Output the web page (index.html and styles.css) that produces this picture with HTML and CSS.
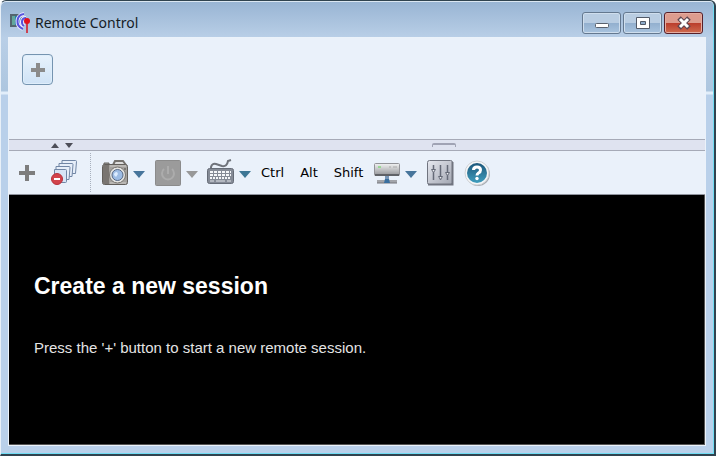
FILE: index.html
```
<!DOCTYPE html>
<html lang="en">
<head>
    <meta charset="UTF-8">
    <meta name="viewport" content="width=device-width, initial-scale=1.0">
    <title>Remote Control</title>
    <link rel="stylesheet" href="styles.css">
</head>
<body>
    <div class="window">
        <header class="titlebar">
            <svg class="app-icon" width="22" height="22" viewBox="0 0 22 22">
                <path d="M0 2h12v13H0z" fill="#53656f"/>
                <path d="M2 4h9v9H2z" fill="#217eaf"/>
                <path d="M2 4h3v9H2z" fill="#62a79b"/>
                <path d="M14 2C6 3 5 14 13 17M16 6c-5 0-5 6-2 8" fill="none" stroke="#eceaff" stroke-width="4"/>
                <path d="M14 2C6 3 5 14 13 17M16 6c-5 0-5 6-2 8" fill="none" stroke="#5754dc" stroke-width="2"/>
                <path d="M17 11v10" stroke="#d51520" stroke-width="1.5"/>
                <circle cx="17" cy="9" r="3" fill="#e31220"/>
            </svg>
            <h1>Remote Control</h1>
            <div class="window-buttons">
                <button type="button" class="window-button" aria-label="Minimize">
                    <svg width="16" height="14" viewBox="0 0 16 14">
                        <rect x="1.5" y="7.5" width="13" height="4" rx="1" fill="#fff" stroke="#59616d"/>
                    </svg>
                </button>
                <button type="button" class="window-button" aria-label="Maximize">
                    <svg width="16" height="14" viewBox="0 0 16 14">
                        <path d="M1.5 1.5h13v11h-13z" fill="#fff" stroke="#525a68"/>
                        <path d="M5.5 5.5h5v3h-5z" fill="#8eaccb" stroke="#525a68"/>
                    </svg>
                </button>
                <button type="button" class="window-button close" aria-label="Close">
                    <svg width="16" height="14" viewBox="0 0 16 14">
                        <path d="M3 2l10 10M13 2L3 12" stroke="#5d4650" stroke-width="5"/>
                        <path d="M4 3l8 8M12 3l-8 8" stroke="#fff" stroke-width="3"/>
                    </svg>
                </button>
            </div>
        </header>

        <main class="content">
            <div class="sessions">
                <button type="button" class="add-session" aria-label="New session">
                    <svg width="16" height="16" viewBox="0 0 16 16">
                        <path d="M6 1h4v5h5v4h-5v5H6v-5H1V6h5z" fill="#8b8b8b"/>
                    </svg>
                </button>
            </div>

            <div class="splitter">
                <button type="button" aria-label="Collapse">
                    <svg width="8" height="5" viewBox="0 0 8 5"><path d="M4 0l4 5H0z" fill="#4d4e58"/></svg>
                </button>
                <button type="button" aria-label="Expand">
                    <svg width="8" height="5" viewBox="0 0 8 5"><path d="M0 0h8L4 5z" fill="#4d4e58"/></svg>
                </button>
                <span class="grip"></span>
            </div>

            <div class="toolbar">
                <button type="button" class="tool" aria-label="New session">
                    <svg width="18" height="18" viewBox="0 0 18 18">
                        <path d="M7 1h4v6h6v4h-6v6H7v-6H1V7h6z" fill="#7d7d7d"/>
                    </svg>
                </button>
                <button type="button" class="tool stack" aria-label="Close all sessions">
                    <svg width="28" height="28" viewBox="0 0 28 28">
                        <g fill="#e6eef9" stroke="#7186a5">
                            <path d="M12 1.5h13.5q1 0 1 1l-1 12H12z"/>
                            <path d="M9 4.5h13q1 0 1 1l-1 12H9z"/>
                            <path d="M6 7.5h13q1 0 1 1l-1 12H6z"/>
                            <path d="M4.5 10.5h11q1 0 1 1v11q0 1-1 1h-11z" fill="#d6e4f5"/>
                        </g>
                        <circle cx="7" cy="20" r="5.5" fill="#d2434b" stroke="#b7313b"/>
                        <path d="M4 19h6v2H4z" fill="#fff"/>
                    </svg>
                </button>
                <span class="divider"></span>
                <button type="button" class="tool drop" aria-label="Screenshot">
                    <svg width="28" height="28" viewBox="0 0 28 28">
                        <path d="M12 6l2-4h8l3 4" fill="#ddd" stroke="#74716d" stroke-width="2"/>
                        <path d="M3 6V4h5v2" fill="#999" stroke="#66635f"/>
                        <rect x="1.5" y="5.5" width="25" height="20" rx="2" fill="#a4a19d" stroke="#625f5b"/>
                        <path d="M2 6h6v19H2z" fill="#797571"/>
                        <path d="M9 7h16M9 24h16" stroke="#d0cecb"/>
                        <circle cx="16.5" cy="16" r="8" fill="#e3e3e1" stroke="#77746f"/>
                        <circle cx="16.5" cy="16" r="5.5" fill="#9dbce4" stroke="#586984"/>
                        <path d="M13 16q0-3 3-3l1 2-2 3z" fill="#dcecff"/>
                        <circle cx="24" cy="10" r="1" fill="#6d6a66"/>
                    </svg>
                    <svg class="arrow" width="12" height="7" viewBox="0 0 12 7"><path d="M0 0h12L6 7z" fill="#47759b"/></svg>
                </button>
                <button type="button" class="tool drop" aria-label="Power" disabled>
                    <svg width="28" height="28" viewBox="0 0 28 28">
                        <rect x="1.5" y="1.5" width="25" height="25" rx="1" fill="#9b9b9b" stroke="#8b8b8b"/>
                        <path d="M10 10a6 6 0 1 0 8 0M14 7v8" fill="none" stroke="#acacac" stroke-width="2"/>
                    </svg>
                    <svg class="arrow" width="12" height="7" viewBox="0 0 12 7"><path d="M0 0h12L6 7z" fill="#989898"/></svg>
                </button>
                <button type="button" class="tool drop" aria-label="Keyboard">
                    <svg width="28" height="28" viewBox="0 0 28 28">
                        <path d="M4 10V8q1-4 5-3l6 2q5 1 6-5l3-1" fill="none" stroke="#6f737b" stroke-width="2"/>
                        <rect x="0.5" y="9.5" width="26" height="15" rx="2" fill="#858b96" stroke="#666c77"/>
                        <path d="M3 13h21M3 16h21" stroke="#f5f7fa" stroke-width="2" stroke-dasharray="3 1"/>
                        <path d="M3 19h21" stroke="#f5f7fa" stroke-width="2" stroke-dasharray="2 1"/>
                        <path d="M3 22h4m2 0h9m2 0h4" stroke="#e1e4e9"/>
                    </svg>
                    <svg class="arrow" width="12" height="7" viewBox="0 0 12 7"><path d="M0 0h12L6 7z" fill="#3d7795"/></svg>
                </button>
                <div class="keys">
                    <button type="button" class="tool">Ctrl</button>
                    <button type="button" class="tool">Alt</button>
                    <button type="button" class="tool">Shift</button>
                </div>
                <button type="button" class="tool drop" aria-label="Virtual media">
                    <svg width="28" height="28" viewBox="0 0 28 28">
                        <defs>
                            <linearGradient id="drive" x2="0" y2="1">
                                <stop stop-color="#f2f3f3"/>
                                <stop offset="1" stop-color="#929397"/>
                            </linearGradient>
                        </defs>
                        <rect x="1.5" y="4.5" width="25" height="12" rx="1" fill="url(#drive)" stroke="#929398"/>
                        <path d="M2 16h24" stroke="#606267" stroke-width="2"/>
                        <path d="M5 8h3" stroke="#5ad951"/>
                        <path d="M16 8h2m2 0h4" stroke="#aaa"/>
                        <path d="M12 17h4v5h-4z" fill="#7896b7"/>
                        <path d="M4 21h20v3H4z" fill="#a3a5aa"/>
                        <path d="M4 24h20" stroke="#74777d"/>
                        <path d="M11 24l1-4h4l1 4z" fill="#396f9f"/>
                    </svg>
                    <svg class="arrow" width="12" height="7" viewBox="0 0 12 7"><path d="M0 0h12L6 7z" fill="#47759b"/></svg>
                </button>
                <button type="button" class="tool" aria-label="Settings">
                    <svg width="28" height="28" viewBox="0 0 28 28">
                        <defs>
                            <linearGradient id="panel" x2="1" y2="1">
                                <stop stop-color="#e6e8ef"/>
                                <stop offset="1" stop-color="#a2a6b1"/>
                            </linearGradient>
                        </defs>
                        <rect x="1.5" y="1.5" width="25" height="24" rx="2" fill="url(#panel)" stroke="#70747f"/>
                        <path d="M2 25.5h24.500V3" fill="none" stroke="#70747f" stroke-width="2"/>
                        <path d="M7.5 6v15M14.5 6v15M21.5 6v15" stroke="#656a77" stroke-width="1.5"/>
                        <path d="M5.5 10.5h4l-2 3zM12.5 17.5h4l-2 3zM19.5 13.5h4l-2 3z" fill="#eef0f4" stroke="#656a77"/>
                    </svg>
                </button>
                <button type="button" class="tool" aria-label="Help">
                    <svg width="28" height="28" viewBox="0 0 28 28">
                        <defs>
                            <linearGradient id="help" x2="0" y2="1">
                                <stop stop-color="#1d577b"/>
                                <stop offset="1" stop-color="#3f9dbd"/>
                            </linearGradient>
                        </defs>
                        <circle cx="15" cy="15" r="12" fill="#a9adb3"/>
                        <circle cx="14" cy="14" r="12" fill="#f5f6f7" stroke="#cfd2d6"/>
                        <circle cx="14" cy="14" r="10" fill="url(#help)"/>
                        <path d="M10.5 11q0-3 3.5-3t3.5 3q0 2-2 3-1.5 1-1.5 2.5" fill="none" stroke="#fff" stroke-width="3"/>
                        <circle cx="14" cy="19.5" r="1.7" fill="#fff"/>
                    </svg>
                </button>
            </div>

            <section class="screen">
                <h2>Create a new session</h2>
                <p>Press the '+' button to start a new remote session.</p>
            </section>
        </main>
    </div>
</body>
</html>
```
FILE: styles.css
```
* {
    box-sizing: border-box;
}
body {
    margin: 0;
    padding: 0 1px 1px 0;
    min-height: 100vh;
    display: flex;
    background: #fff;
}
h1, h2, p {
    margin: 0;
    font-weight: normal;
}
button {
    padding: 0;
    border: none;
    background: none;
    color: inherit;
    font: inherit;
}
svg {
    display: block;
}
.window {
    flex: 1;
    display: flex;
    flex-direction: column;
    padding: 0 8px 8px 7px;
    border: solid #30434f;
    border-width: 1px 2px 2px 1px;
    border-left-color: #e8f0f8;
    border-radius: 6px 6px 0 0;
    background: linear-gradient(#98b4d3, #b9cfe7 37px, #adc6df 90px, #e2eefa 91px, #e2eefa 93px, #b9d0ea 94px);
    box-shadow: inset 0 1px #dbe7f2, inset -1px -1px #6fdcf3;
}
.titlebar {
    display: flex;
    align-items: center;
    height: 36px;
    padding: 8px 3px 0 2px;
}
.titlebar h1 {
    flex: 1;
    margin-left: 3px;
    color: #151c26;
    font: 14px/20px "Noto Sans", "Segoe UI", sans-serif;
}
.window-buttons {
    display: flex;
    gap: 2px;
}
.window-button {
    display: flex;
    align-items: center;
    justify-content: center;
    width: 39px;
    height: 22px;
    border: 1px solid #64788f;
    border-radius: 3px;
    background: linear-gradient(#b9cde2 50%, #92afce 50%, #a9c4df);
    box-shadow: inset 0 0 0 1px #cfdeed;
}
.window-button.close {
    border-color: #571f29;
    background: linear-gradient(#dd9c8e 50%, #ba3c2b 50%, #cf6c50);
    box-shadow: inset 0 0 0 1px #e5ada1;
}
.content {
    flex: 1;
    display: flex;
    flex-direction: column;
    border: 1px solid #ebf2fa;
    background: #eaf1fa;
}
.sessions {
    height: 101px;
    padding: 16px 13px;
}
.add-session {
    display: flex;
    align-items: center;
    justify-content: center;
    width: 31px;
    height: 31px;
    border: 1px solid #7594b0;
    border-radius: 4px;
    background: linear-gradient(#e8f2fc, #cfe3f6);
    box-shadow: inset 0 0 0 1px #dfeefb;
}
.splitter {
    display: flex;
    align-items: center;
    gap: 6px;
    height: 12px;
    padding-left: 42px;
    border: solid #a6aab7;
    border-width: 1px 0;
    background: #dfe3f0;
}
.grip {
    width: 24px;
    height: 4px;
    margin: 0 38% 0 auto;
    border: solid #a0a3b4;
    border-width: 2px 1px 0;
    border-radius: 2px 2px 0 0;
}
.toolbar {
    display: flex;
    align-items: center;
    gap: 9px;
    height: 44px;
    padding: 0 9px;
    border-bottom: 1px solid #90949e;
    font: 13px/20px "DejaVu Sans", Verdana, sans-serif;
    color: #000;
}
.tool {
    display: flex;
    align-items: center;
}
.drop {
    gap: 4px;
}
.arrow {
    margin-top: 4px;
}
.stack {
    margin-left: 5px;
}
.divider {
    align-self: stretch;
    margin: 2px 1px 2px 3px;
    border-left: 1px dotted #a8b0bd;
}
.keys {
    display: flex;
    gap: 16px;
    padding: 0 1px;
}
.screen {
    flex: 1;
    padding: 77px 25px 24px;
    border: solid #555;
    border-width: 0 1px 1px 0;
    background: #000;
    color: #fff;
    font-family: "Liberation Sans", Arial, sans-serif;
}
.screen h2 {
    font-size: 23px;
    line-height: 28px;
    font-weight: bold;
}
.screen p {
    margin-top: 38px;
    font-size: 15px;
    line-height: 20px;
    color: #e4e4e4;
}
```
